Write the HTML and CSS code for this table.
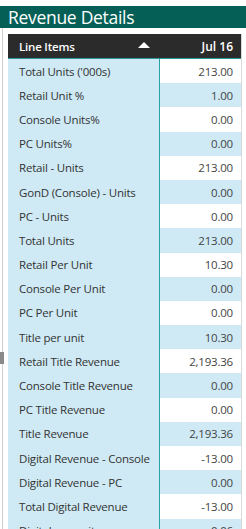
FILE: index.html
```html
<!DOCTYPE html>
<html>
<head>
<meta charset="utf-8">
<link rel="stylesheet" href="styles.css">
</head>
<body>
<div class="title">Revenue Details</div>
<div class="frame">
  <div class="thumb"></div>
  <div class="table">
    <div class="head">
      <div class="hl">Line Items<span class="tri"></span></div>
      <div class="hv">Jul 16</div>
    </div>
    <div class="row"><div class="l">Total Units ('000s)</div><div class="v">213.00</div></div>
    <div class="row"><div class="l">Retail Unit %</div><div class="v">1.00</div></div>
    <div class="row"><div class="l">Console Units%</div><div class="v">0.00</div></div>
    <div class="row"><div class="l">PC Units%</div><div class="v">0.00</div></div>
    <div class="row"><div class="l">Retail - Units</div><div class="v">213.00</div></div>
    <div class="row"><div class="l">GonD (Console) - Units</div><div class="v">0.00</div></div>
    <div class="row"><div class="l">PC - Units</div><div class="v">0.00</div></div>
    <div class="row"><div class="l">Total Units</div><div class="v">213.00</div></div>
    <div class="row"><div class="l">Retail Per Unit</div><div class="v">10.30</div></div>
    <div class="row"><div class="l">Console Per Unit</div><div class="v">0.00</div></div>
    <div class="row"><div class="l">PC Per Unit</div><div class="v">0.00</div></div>
    <div class="row"><div class="l">Title per unit</div><div class="v">10.30</div></div>
    <div class="row"><div class="l">Retail Title Revenue</div><div class="v">2,193.36</div></div>
    <div class="row"><div class="l">Console Title Revenue</div><div class="v">0.00</div></div>
    <div class="row"><div class="l">PC Title Revenue</div><div class="v">0.00</div></div>
    <div class="row"><div class="l">Title Revenue</div><div class="v">2,193.36</div></div>
    <div class="row"><div class="l">Digital Revenue - Console</div><div class="v">-13.00</div></div>
    <div class="row"><div class="l">Digital Revenue - PC</div><div class="v">0.00</div></div>
    <div class="row"><div class="l">Total Digital Revenue</div><div class="v">-13.00</div></div>
    <div class="row"><div class="l">Digital per unit</div><div class="v">0.06</div></div>
  </div>
</div>
</body>
</html>
```
FILE: styles.css
```css
html, body {
  margin: 0;
  padding: 0;
  background: #ffffff;
  overflow: hidden;
}
body {
  font-family: "Open Sans", "Noto Sans", sans-serif;
  color: #333333;
}
.title {
  margin-top: 6px;
  height: 22px;
  background: #065f57;
  color: #ffffff;
  font-size: 17.5px;
  line-height: 22px;
  padding-left: 8px;
  letter-spacing: -0.3px;
}
.frame {
  position: relative;
  margin-left: 2px;
  border-left: 1px solid #cfcfcf;
  padding: 6px 0 0 5px;
  height: 600px;
}
.thumb {
  position: absolute;
  left: -3px;
  top: 324px;
  width: 4px;
  height: 12px;
  background: #8a8a8a;
}
.table {
  width: 233px;
  border-right: 1px solid #d9d9d9;
}
.head {
  display: flex;
  height: 24px;
  background: #2b2b2b;
  color: #ffffff;
  font-size: 11.5px;
  font-weight: 600;
  border-bottom: 1px solid #2a9d9a;
}
.hl {
  width: 151px;
  padding-left: 11px;
  box-sizing: border-box;
  display: flex;
  align-items: center;
  justify-content: space-between;
  padding-right: 9px;
  letter-spacing: -0.2px;
}
.tri {
  width: 0;
  height: 0;
  border-left: 6px solid transparent;
  border-right: 6px solid transparent;
  border-bottom: 6px solid #ffffff;
  margin-top: -2px;
}
.hv {
  flex: 1;
  display: flex;
  align-items: center;
  justify-content: flex-end;
  padding-right: 8px;
  font-size: 12px;
  border-left: 1px solid #2b2b2b;
}
.row {
  display: flex;
  height: 24.2px;
  font-size: 11.5px;
  letter-spacing: -0.2px;
}
.l {
  width: 151px;
  box-sizing: border-box;
  padding-left: 11px;
  background: #cfeaf5;
  display: flex;
  align-items: center;
}
.v {
  flex: 1;
  border-left: 1px solid #27a3a0;
  display: flex;
  align-items: center;
  justify-content: flex-end;
  padding-right: 8px;
  background: #ffffff;
  color: #444444;
}
.row:nth-child(odd) .v {
  background: #cfeaf5;
}
```
